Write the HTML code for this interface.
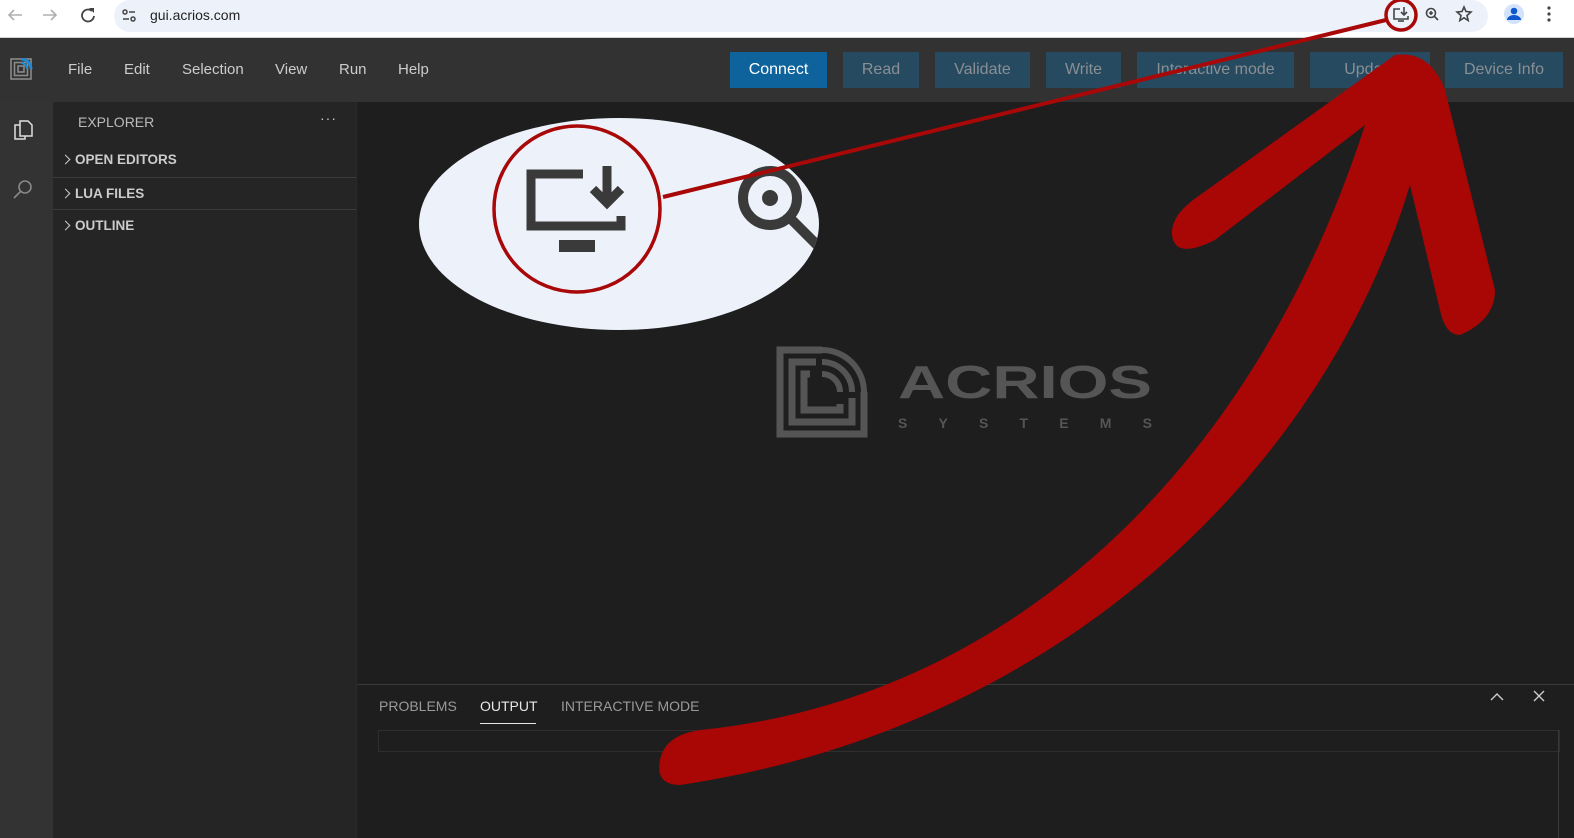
<!DOCTYPE html>
<html><head><meta charset="utf-8"><style>
*{margin:0;padding:0;box-sizing:border-box}
body{width:1574px;height:838px;overflow:hidden;background:#1e1e1e;font-family:"Liberation Sans",Arial,sans-serif;position:relative}
.abs{position:absolute}
.btn{position:absolute;top:52px;height:36px;background:#264a60;color:#8a8f94;font-size:16px;display:flex;align-items:center;justify-content:center}
.menu{position:absolute;top:61px;color:#cccccc;font-size:15px}
.sec{position:absolute;left:53px;width:303px;height:32px;color:#cccccc;font-weight:bold;font-size:13.5px;padding-left:22px;line-height:32px;border-top:1px solid #3c3c3c}
.sec:before{content:"";position:absolute;left:9px;top:12px;width:6px;height:6px;border-right:1.5px solid #ccc;border-top:1.5px solid #ccc;transform:rotate(45deg)}
.tab{position:absolute;top:698px;font-size:14px;color:#9a9a9a}
</style></head><body>
<!-- browser bar -->
<div class="abs" style="left:0;top:0;width:1574px;height:38px;background:#fff;border-bottom:1px solid #d0d0d0"></div>
<div class="abs" style="left:114px;top:0;width:1374px;height:32px;background:#edf2fa;border-radius:0 0 16px 16px;border-top-left-radius:16px;border-top-right-radius:16px"></div>
<svg class="abs" style="left:0;top:0" width="1574" height="38">
<g stroke="#b0b0b0" stroke-width="1.6" fill="none"><path d="M9 15h13M14 10l-5 5 5 5"/><path d="M43 15h13M51 10l5 5-5 5"/></g>
<path d="M92 11a6 6 0 1 0 2 5" stroke="#444" stroke-width="1.8" fill="none"/><path d="M89 8h5v5z" fill="#444"/>
<g stroke="#444" stroke-width="1.5" fill="none"><circle cx="125" cy="12" r="2"/><path d="M129 12h6M123 19h6"/><circle cx="133" cy="19" r="2"/></g>
<g stroke="#444" stroke-width="1.6" fill="none"><path d="M1400 9h-6v10h14v-3"/><path d="M1404 7v8M1401 12l3 3 3-3"/><path d="M1398 21h6"/>
<circle cx="1431" cy="13" r="4.5"/><path d="M1434 16l4 4M1429 13h4M1431 11v4"/>
<path d="M1464 7l2 4.5 5 .5-4 3.5 1.2 5-4.2-2.7-4.2 2.7 1.2-5-4-3.5 5-.5z"/></g>
<circle cx="1514" cy="14" r="10" fill="#d3e3fd"/><circle cx="1514" cy="11" r="3.3" fill="#0b57d0"/><path d="M1507 20a7 5 0 0 1 14 0z" fill="#0b57d0"/>
<g fill="#444"><circle cx="1549" cy="8" r="1.6"/><circle cx="1549" cy="14" r="1.6"/><circle cx="1549" cy="20" r="1.6"/></g>
</svg>
<div class="abs" style="left:150px;top:7px;font-size:14px;color:#222">gui.acrios.com</div>
<!-- app header -->
<div class="abs" style="left:0;top:38px;width:1574px;height:64px;background:#323233"></div>
<svg class="abs" style="left:10px;top:58px" width="24" height="22"><g fill="none" stroke="#8a8a8a" stroke-width="1.6"><rect x="1" y="1" width="20" height="20"/><rect x="4.5" y="4.5" width="13" height="13"/><rect x="8" y="8" width="6" height="6"/></g><path d="M11 1a10 10 0 0 1 10 10" stroke="#1e8ad6" stroke-width="3" fill="none"/><path d="M11 5a6 6 0 0 1 6 6" stroke="#1e8ad6" stroke-width="2" fill="none"/></svg>
<div class="menu" style="left:68px">File</div><div class="menu" style="left:124px">Edit</div><div class="menu" style="left:182px">Selection</div><div class="menu" style="left:275px">View</div><div class="menu" style="left:339px">Run</div><div class="menu" style="left:398px">Help</div>
<div class="btn" style="left:730px;width:97px;background:#0e639c;color:#fff">Connect</div>
<div class="btn" style="left:843px;width:76px">Read</div>
<div class="btn" style="left:935px;width:95px">Validate</div>
<div class="btn" style="left:1046px;width:75px">Write</div>
<div class="btn" style="left:1137px;width:157px">Interactive mode</div>
<div class="btn" style="left:1310px;width:120px">Update</div>
<div class="btn" style="left:1445px;width:118px">Device Info</div>
<!-- activity bar -->
<div class="abs" style="left:0;top:102px;width:53px;height:736px;background:#333333"></div>
<svg class="abs" style="left:11px;top:118px" width="24" height="24"><g fill="none" stroke="#e0e0e0" stroke-width="1.5"><path d="M9 3h8l4 4v11H9z"/><path d="M9 7H4v14h10v-3"/></g></svg>
<svg class="abs" style="left:11px;top:178px" width="24" height="24"><g fill="none" stroke="#888" stroke-width="1.6"><circle cx="14" cy="9" r="6"/><path d="M10 13l-7 7"/></g></svg>
<!-- sidebar -->
<div class="abs" style="left:53px;top:102px;width:303px;height:736px;background:#252526"></div>
<div class="abs" style="left:78px;top:114px;font-size:14px;color:#bbbbbb">EXPLORER</div>
<div class="abs" style="left:320px;top:110px;font-size:14px;color:#ccc;letter-spacing:1px">···</div>
<div class="sec" style="top:144px;border-top:none">OPEN EDITORS</div>
<div class="sec" style="top:177px">LUA FILES</div>
<div class="sec" style="top:209px">OUTLINE</div>
<!-- logo -->
<svg class="abs" style="left:776px;top:346px" width="380" height="92">
<g fill="none" stroke="#555" stroke-width="7"><path d="M46 4H4v84h84V46"/><path d="M40 16H16v60h60V52"/><path d="M34 28H28v36h36V58"/></g>
<g fill="none" stroke="#555" stroke-width="6"><path d="M46 4a42 42 0 0 1 42 42"/><path d="M46 16a30 30 0 0 1 30 30"/><path d="M46 28a18 18 0 0 1 18 18"/></g>
<text x="122" y="52" font-family="Liberation Sans" font-weight="bold" font-size="46" fill="#555" textLength="254" lengthAdjust="spacingAndGlyphs">ACRIOS</text>
<text x="122" y="82" font-family="Liberation Sans" font-weight="bold" font-size="14" fill="#555" textLength="254" lengthAdjust="spacing">SYSTEMS</text>
</svg>
<!-- panel -->
<div class="abs" style="left:356px;top:684px;width:1218px;height:1px;background:#3a3a3a"></div>
<div class="abs" style="left:356px;top:102px;width:1px;height:736px;background:#2a2a2a"></div>
<div class="tab" style="left:379px">PROBLEMS</div>
<div class="tab" style="left:480px;color:#e7e7e7">OUTPUT</div>
<div class="abs" style="left:480px;top:723px;width:56px;height:1px;background:#e7e7e7"></div>
<div class="tab" style="left:561px">INTERACTIVE MODE</div>
<div class="abs" style="left:378px;top:730px;width:1182px;height:22px;border:1px solid #2e2e2e"></div>
<div class="abs" style="left:1558px;top:730px;width:1px;height:108px;background:#3a3a3a"></div>
<svg class="abs" style="left:1488px;top:688px" width="60" height="20"><g fill="none" stroke="#ccc" stroke-width="1.4"><path d="M3 12l6-6 6 6"/><path d="M46 3l10 10M56 3l-10 10"/></g></svg>
<!-- annotations -->
<svg class="abs" style="left:0;top:0" width="1574" height="838">
<defs><clipPath id="c"><ellipse cx="619" cy="224" rx="200" ry="106"/></clipPath></defs>
<ellipse cx="619" cy="224" rx="200" ry="106" fill="#edf2fa"/>
<g fill="none" stroke="#3a3a3a" stroke-width="9"><path d="M583 174h-52v52h90v-10"/><path d="M607 166v34M593 189l14 14 14-14"/></g>
<rect x="559" y="240" width="36" height="12" fill="#3a3a3a"/>
<g clip-path="url(#c)" fill="none" stroke="#3a3a3a" stroke-width="10"><circle cx="770" cy="198" r="27"/><path d="M790 218l40 40"/></g>
<circle cx="770" cy="198" r="8" fill="#3a3a3a"/>
<circle cx="577" cy="209" r="83" fill="none" stroke="#a80808" stroke-width="3.5"/>
<path d="M663 197L1386 20" stroke="#a80808" stroke-width="4"/>
<circle cx="1401" cy="15" r="15" fill="none" stroke="#a80808" stroke-width="3.5"/>
<path fill="#a90606" d="M680 785Q655 785 660 760Q665 735 700 730C1000 700 1250 480 1365 125L1215 240Q1175 260 1172 235Q1170 215 1200 195L1395 55Q1430 50 1445 90L1495 290Q1495 320 1460 335Q1445 335 1440 310L1410 185C1320 480 1050 730 680 785Z"/>
</svg>
</body></html>
